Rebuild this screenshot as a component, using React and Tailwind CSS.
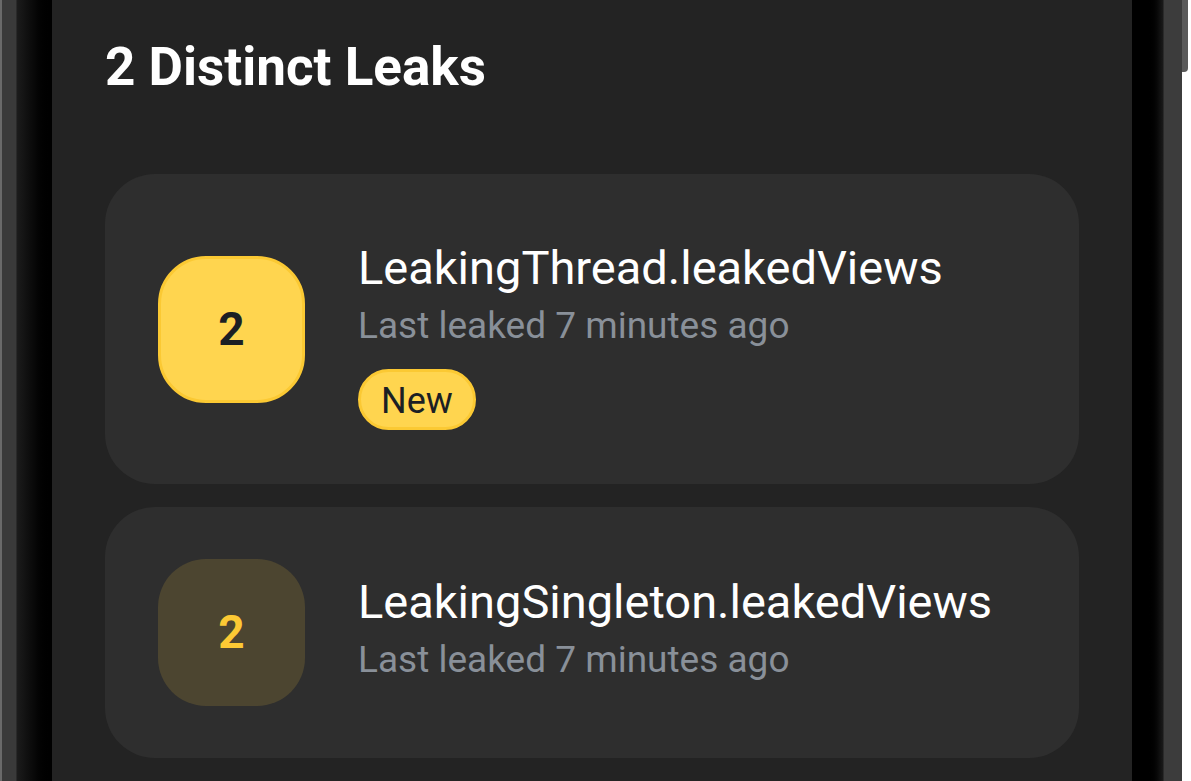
import React from "react";

const leaks = [
  { count: 2, name: "LeakingThread.leakedViews", when: "Last leaked 7 minutes ago", isNew: true },
  { count: 2, name: "LeakingSingleton.leakedViews", when: "Last leaked 7 minutes ago", isNew: false },
];

function LeakRow({ leak }) {
  return (
    <div className="flex items-center gap-[53px] rounded-[50px] bg-[#2e2e2e] py-[52px] pl-[53px] pr-8">
      <div
        className={
          leak.isNew
            ? "flex h-[147px] w-[147px] shrink-0 items-center justify-center rounded-[48px] border-[3px] border-[#fbc933] bg-[#ffd54f] text-[46px] font-bold text-[#1c1f24]"
            : "flex h-[147px] w-[147px] shrink-0 items-center justify-center rounded-[48px] bg-[#4c4530] text-[46px] font-bold text-[#fcc934]"
        }
      >
        {leak.count}
      </div>
      <div className={leak.isNew ? "flex flex-col pt-[14px] pb-[2px]" : "flex flex-col pb-[7px]"}>
        <div className="text-[47px] leading-[56px] text-white">{leak.name}</div>
        <div className="mt-[5px] text-[37px] leading-[50px] text-[#899099]">{leak.when}</div>
        {leak.isNew && (
          <div className="mt-[18px] self-start rounded-full border-[3px] border-[#fbc933] bg-[#ffd54f] px-5 pt-1 text-[36px] leading-[51px] text-[#1c1f24]">
            New
          </div>
        )}
      </div>
    </div>
  );
}

export default function App() {
  return (
    <div className="flex h-[781px] w-full overflow-hidden bg-white" style={{ fontFamily: "Roboto, 'Noto Sans', sans-serif" }}>
      <div className="w-[2px] bg-[#6a6a6a]" />
      <div className="w-[15px] border-r border-[#2a2a2a] bg-[#3a3a3a]" />
      <div className="w-[35px] bg-gradient-to-r from-[#1c1c1c] via-[#080808] to-black" />
      <div className="flex-1 bg-[#232323] px-[53px]">
        <h1 className="pt-[35px] text-[53px] font-bold leading-[64px] text-white">2 Distinct Leaks</h1>
        <div className="mt-[75px] flex flex-col gap-[23px]">
          {leaks.map((leak) => (
            <LeakRow key={leak.name} leak={leak} />
          ))}
        </div>
      </div>
      <div className="w-[31px] bg-gradient-to-r from-black via-black to-[#1a1a1a]" />
      <div className="w-[19px] border-l border-[#2a2a2a] bg-[#3c3c3c]" />
      <div className="flex w-[9px] flex-col bg-white">
        <div className="h-[72px] w-[6px] rounded-br bg-[#5a5a5a]" />
      </div>
    </div>
  );
}
